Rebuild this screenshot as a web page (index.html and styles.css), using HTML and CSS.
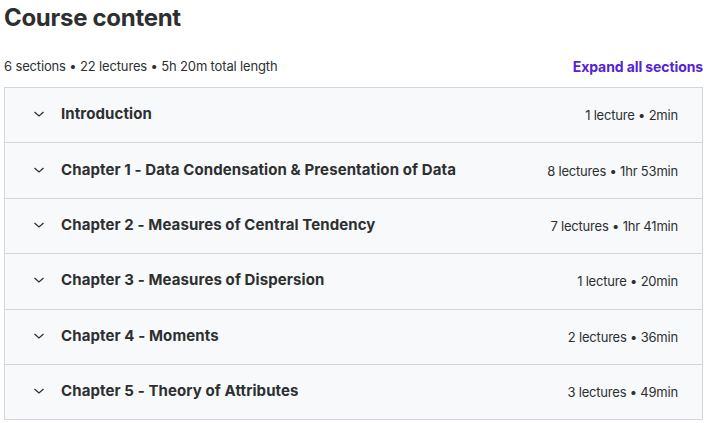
FILE: index.html
```html
<!DOCTYPE html>
<html lang="en">
<head>
    <meta charset="UTF-8">
    <meta name="viewport" content="width=device-width, initial-scale=1.0">
    <title>Course content</title>
    <link rel="stylesheet" href="styles.css">
</head>
<body>
    <div id="curriculum">
        <h2 class="title">Course content</h2>
        <div class="summary">
            <span class="stats">6 sections • 22 lectures • 5h 20m total length</span>
            <button class="expandAll">Expand all sections</button>
        </div>

        <!-- Sections list -->
        <div class="sections">
            <div class="section">
                <svg class="chevron" viewBox="0 0 12 8" width="12" height="8"><path d="M1.5 2l4.5 4 4.5-4" fill="none" stroke="#2d2f31" stroke-width="1.3"/></svg>
                <span class="sectionTitle">Introduction</span>
                <span class="sectionMeta">1 lecture • 2min</span>
            </div>
            <div class="section">
                <svg class="chevron" viewBox="0 0 12 8" width="12" height="8"><path d="M1.5 2l4.5 4 4.5-4" fill="none" stroke="#2d2f31" stroke-width="1.3"/></svg>
                <span class="sectionTitle">Chapter 1 - Data Condensation &amp; Presentation of Data</span>
                <span class="sectionMeta">8 lectures • 1hr 53min</span>
            </div>
            <div class="section">
                <svg class="chevron" viewBox="0 0 12 8" width="12" height="8"><path d="M1.5 2l4.5 4 4.5-4" fill="none" stroke="#2d2f31" stroke-width="1.3"/></svg>
                <span class="sectionTitle">Chapter 2 - Measures of Central Tendency</span>
                <span class="sectionMeta">7 lectures • 1hr 41min</span>
            </div>
            <div class="section">
                <svg class="chevron" viewBox="0 0 12 8" width="12" height="8"><path d="M1.5 2l4.5 4 4.5-4" fill="none" stroke="#2d2f31" stroke-width="1.3"/></svg>
                <span class="sectionTitle">Chapter 3 - Measures of Dispersion</span>
                <span class="sectionMeta">1 lecture • 20min</span>
            </div>
            <div class="section">
                <svg class="chevron" viewBox="0 0 12 8" width="12" height="8"><path d="M1.5 2l4.5 4 4.5-4" fill="none" stroke="#2d2f31" stroke-width="1.3"/></svg>
                <span class="sectionTitle">Chapter 4 - Moments</span>
                <span class="sectionMeta">2 lectures • 36min</span>
            </div>
            <div class="section">
                <svg class="chevron" viewBox="0 0 12 8" width="12" height="8"><path d="M1.5 2l4.5 4 4.5-4" fill="none" stroke="#2d2f31" stroke-width="1.3"/></svg>
                <span class="sectionTitle">Chapter 5 - Theory of Attributes</span>
                <span class="sectionMeta">3 lectures • 49min</span>
            </div>
        </div>
    </div>
</body>
</html>
```

FILE: styles.css
```css
body {
    font-family: Inter, "Noto Sans", sans-serif;
    margin: 0;
    padding: 0;
    background-color: #fff;
    color: #2d2f31;
}

#curriculum {
    padding: 0 5px 0 4px;
}

.title {
    font-size: 24px;
    font-weight: 700;
    margin: 0;
    padding-top: 3px;
    line-height: 30px;
    letter-spacing: -0.3px;
}

.summary {
    display: flex;
    justify-content: space-between;
    align-items: center;
    margin-top: 20px;
    height: 26px;
    margin-bottom: 8px;
}

.stats {
    font-size: 13px;
    letter-spacing: -0.15px;
    color: #2d2f31;
}

.expandAll {
    background: none;
    border: none;
    padding: 0;
    font-family: inherit;
    font-size: 14px;
    font-weight: 700;
    letter-spacing: -0.1px;
    color: #5624d0;
    cursor: pointer;
}

.sections {
    border: 1px solid #d1d7dc;
    border-bottom: none;
}

.section {
    display: flex;
    align-items: center;
    height: 54.4px;
    padding: 0 24px 0 28px;
    background-color: #f7f9fa;
    border-bottom: 1px solid #d1d7dc;
}

.chevron {
    flex-shrink: 0;
    margin-right: 16px;
    margin-top: -2px;
}

.sectionTitle {
    flex-grow: 1;
    font-size: 15px;
    font-weight: 700;
    letter-spacing: 0.1px;
    margin-top: -3px;
}

.sectionMeta {
    font-size: 13px;
    letter-spacing: -0.2px;
}
```
